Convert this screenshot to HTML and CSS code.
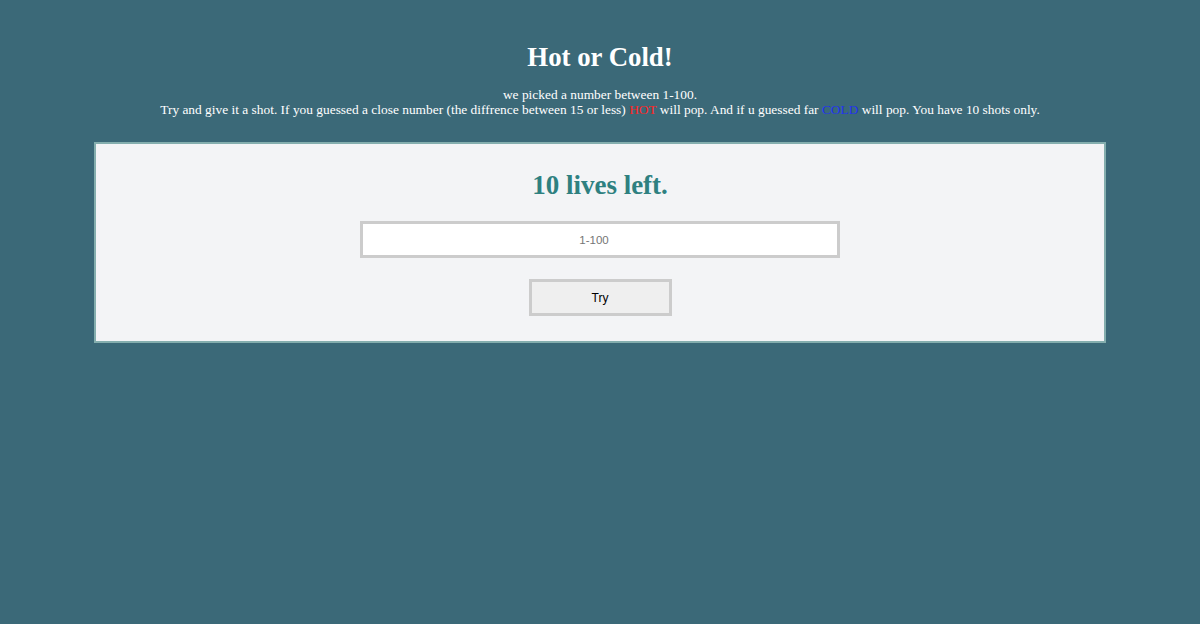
FILE: index.html
```html
<!DOCTYPE html>
<html>
<head>
<meta charset="utf-8">
<title>Hot or Cold</title>
<link rel="stylesheet" href="styles.css">
</head>
<body>
<header class="intro">
  <h1 class="title">Hot or Cold!</h1>
  <p class="rules">we picked a number between 1-100.<br>Try and give it a shot. If you guessed a close number (the diffrence between 15 or less) <span class="hot">HOT</span> will pop. And if u guessed far <span class="cold">COLD</span> will pop. You have 10 shots only.</p>
</header>
<main class="game">
  <h2 class="lives">10 lives left.</h2>
  <input class="guess" type="text" placeholder="1-100">
  <button class="try">Try</button>
</main>
</body>
</html>
```
FILE: styles.css
```css
html, body {
  margin: 0;
  padding: 0;
}
body {
  background: #3b6978;
  font-family: "Liberation Serif", "Times New Roman", serif;
  color: #fff;
  padding-top: 40px;
}
.intro {
  text-align: center;
}
.title {
  margin: 0;
  font-size: 26.8px;
  line-height: 34px;
  font-weight: bold;
}
.rules {
  margin: 13px 0 0;
  font-size: 13.4px;
  line-height: 15px;
}
.hot { color: #ff2626; }
.cold { color: #2233f0; }
.game {
  width: 1008px;
  margin: 25px auto 0;
  background: #f3f4f6;
  border: 2px solid #84aeae;
  display: flex;
  flex-direction: column;
  align-items: center;
  padding: 25px 0 25px;
}
.lives {
  margin: 0;
  color: #2e8080;
  font-size: 27px;
  line-height: 32px;
  font-weight: bold;
}
.guess {
  margin-top: 20px;
  width: 480px;
  height: 37px;
  box-sizing: border-box;
  border: 3px solid #cccccc;
  background: #fff;
  text-align: center;
  padding: 0 14px 0 2px;
  font-family: "Liberation Sans", Arial, sans-serif;
  font-size: 11.5px;
  outline: none;
}
.guess::placeholder { color: #757575; }
.try {
  margin-top: 21px;
  width: 143px;
  height: 37px;
  box-sizing: border-box;
  border: 3px solid #cccccc;
  background: #efefef;
  font-family: "Liberation Sans", Arial, sans-serif;
  font-size: 12px;
  color: #000;
}
```
